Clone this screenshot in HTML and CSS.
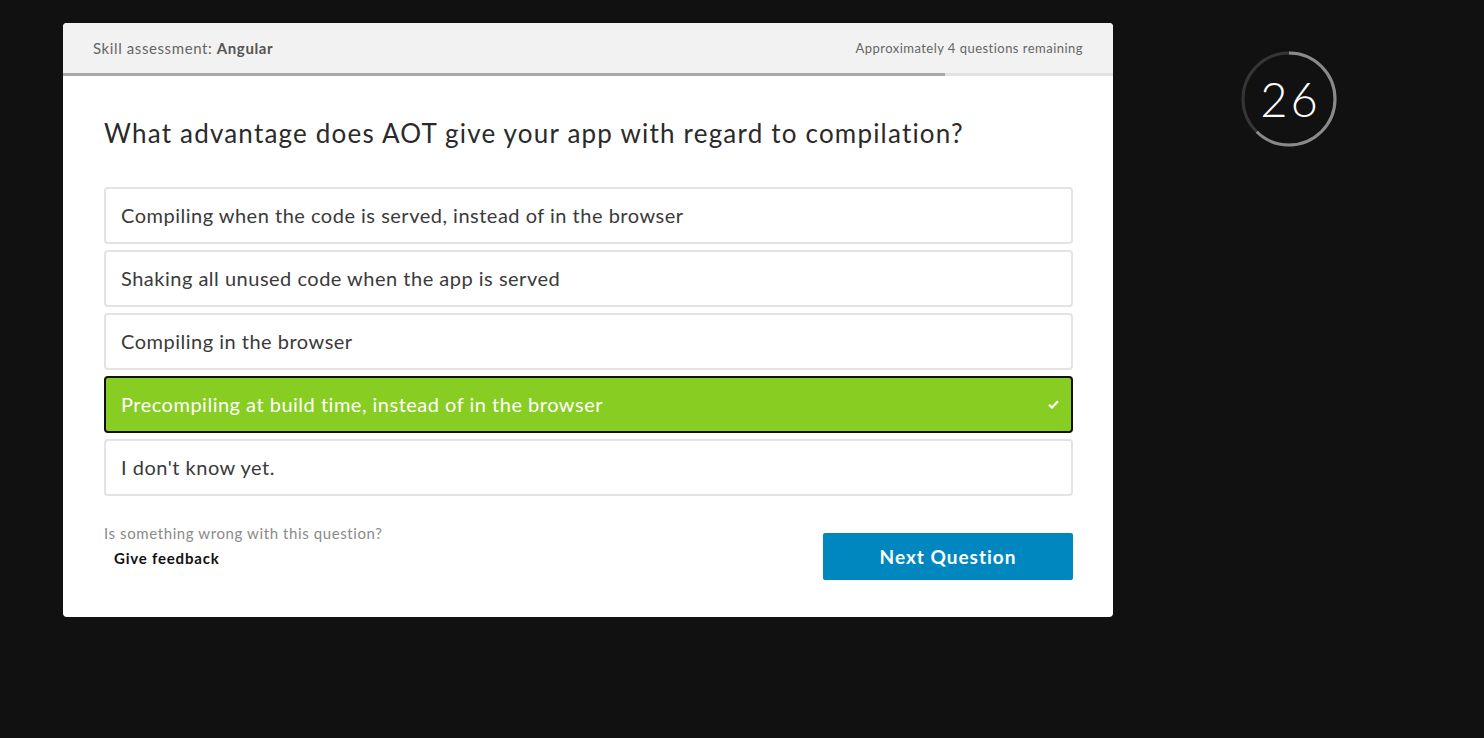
FILE: index.html
```html
<!DOCTYPE html>
<html>
<head>
<meta charset="utf-8">
<link rel="stylesheet" href="styles.css">
</head>
<body>
<div class="page">
  <div class="card">
    <div class="header">
      <div class="title">Skill assessment: <strong>Angular</strong></div>
      <div class="remaining">Approximately 4 questions remaining</div>
    </div>
    <div class="progress"><div class="progress-fill" style="width:84%"></div></div>
    <div class="body">
      <h1 class="question">What advantage does AOT give your app with regard to compilation?</h1>
      <ul class="options">
        <li class="option">Compiling when the code is served, instead of in the browser</li>
        <li class="option">Shaking all unused code when the app is served</li>
        <li class="option">Compiling in the browser</li>
        <li class="option selected">Precompiling at build time, instead of in the browser
          <svg class="check" width="11" height="9" viewBox="0 0 11 9"><path d="M1 4.8 L4 7.5 L10 1.2" fill="none" stroke="#fff" stroke-width="2.2"/></svg>
        </li>
        <li class="option">I don't know yet.</li>
      </ul>
      <div class="footer">
        <div class="feedback">
          <div class="wrong">Is something wrong with this question?</div>
          <div class="give">Give feedback</div>
        </div>
        <button class="next">Next Question</button>
      </div>
    </div>
  </div>
  <div class="timer">
    <svg width="96" height="96" viewBox="0 0 96 96">
      <circle cx="48" cy="48" r="46" fill="none" stroke="#363636" stroke-width="3"/>
      <circle cx="48" cy="48" r="46" fill="none" stroke="#8a8a8a" stroke-width="3" stroke-dasharray="180 400" transform="rotate(-90 48 48)"/>
    </svg>
    <span class="count">26</span>
  </div>
</div>
</body>
</html>
```

FILE: styles.css
```css
* { box-sizing: border-box; }
html, body { margin: 0; padding: 0; background: #111111; }
body { font-family: "Lato", "Noto Sans", sans-serif; color: #333; }
.page { display: flex; align-items: flex-start; padding: 23px 0 0 63px; height: 738px; }
.card { width: 1050px; background: #fff; border-radius: 4px; overflow: hidden; }
.header { height: 50px; background: #f2f2f2; display: flex; align-items: center; justify-content: space-between; padding: 0 30px; }
.title { font-size: 15px; color: #666; letter-spacing: 0.6px; }
.title strong { font-weight: 700; color: #555; }
.remaining { font-size: 13px; color: #666; letter-spacing: 0.47px; }
.progress { height: 3px; background: #e2e2e2; }
.progress-fill { height: 3px; background: #a8a8a8; }
.body { padding: 42px 40px 37px 41px; }
.question { margin: 0 0 39px; font-size: 26px; font-weight: 400; color: #2a2a2a; letter-spacing: 1.2px; line-height: 30px; }
.options { list-style: none; margin: 0; padding: 0; display: flex; flex-direction: column; gap: 6px; }
.option { position: relative; height: 57px; border: 2px solid #e3e3e3; border-radius: 4px; display: flex; align-items: center; padding: 0 15px 2px; font-size: 20px; color: #3a3a3a; letter-spacing: 0.5px; }
.option.selected { background: #88cd22; border-color: #111; color: #fff; }
.check { position: absolute; right: 12px; top: 22px; }
.footer { display: flex; justify-content: space-between; align-items: flex-start; margin-top: 28px; }
.wrong { font-size: 15px; color: #8a8a8a; letter-spacing: 0.6px; }
.give { font-size: 15px; color: #111; font-weight: 700; margin: 7px 0 0 10px; letter-spacing: 0.8px; }
.next { width: 250px; height: 47px; margin-top: 9px; border: none; border-radius: 2px; background: #0087c0; color: #fff; font-family: inherit; font-size: 19px; font-weight: 700; letter-spacing: 1px; }
.timer { position: relative; width: 96px; height: 96px; margin: 28px 0 0 128px; display: flex; align-items: center; justify-content: center; }
.timer svg { position: absolute; left: 0; top: 0; }
.count { position: relative; font-size: 47px; color: #fff; font-weight: 300; letter-spacing: 3px; margin-left: 3px; }
```
